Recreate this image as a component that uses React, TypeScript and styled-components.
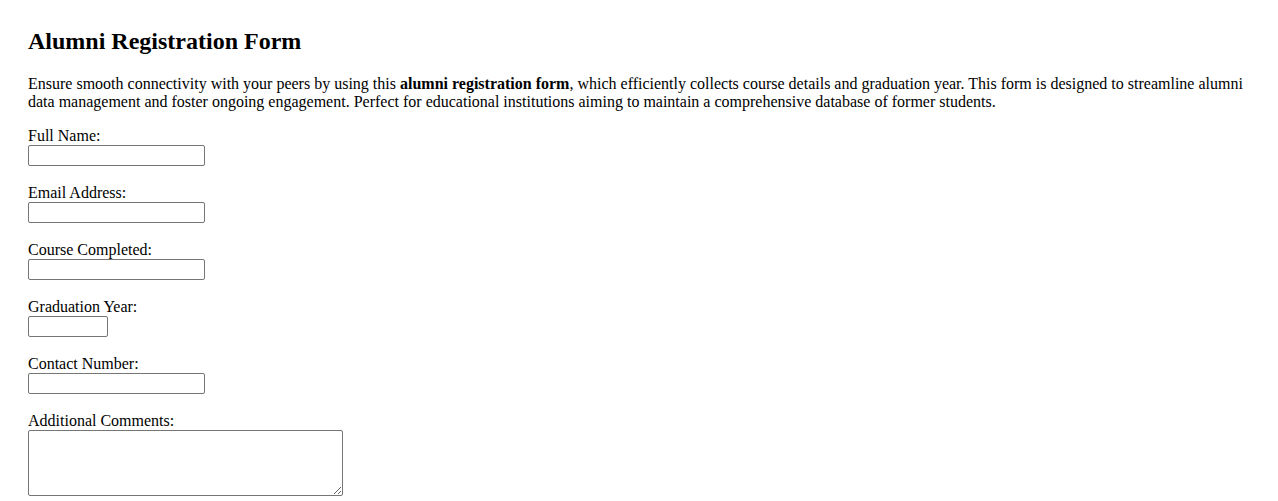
import React from 'react';
import styled, { createGlobalStyle } from 'styled-components';

const GlobalStyle = createGlobalStyle`
  body {
    margin: 0;
    padding: 28px;
    background: #fff;
    color: #000;
    font-family: "Liberation Serif", "Times New Roman", serif;
    font-size: 16px;
  }
`;

const Page = styled.div`
  display: flex;
  flex-direction: column;
`;

const Title = styled.h2`
  margin: 0 0 20px;
  font-size: 24px;
  font-weight: 700;
  line-height: 27px;
`;

const Intro = styled.p`
  margin: 0 0 16px;
  line-height: 18px;
`;

const Form = styled.form`
  display: flex;
  flex-direction: column;
  gap: 18px;
`;

const Field = styled.div`
  display: flex;
  flex-direction: column;
  align-items: flex-start;
`;

const Label = styled.label`
  height: 18px;
  line-height: 18px;
`;

const TextInput = styled.input<{ $width?: number }>`
  box-sizing: border-box;
  width: ${(p) => p.$width ?? 177}px;
  height: 21px;
  margin: 0;
  padding: 1px 2px;
  border: 1px solid #767676;
  border-radius: 2px;
  background: #fff;
  font-family: "Liberation Sans", Arial, sans-serif;
  font-size: 13px;
`;

const Comments = styled.textarea`
  box-sizing: border-box;
  width: 315px;
  height: 66px;
  margin: 0;
  padding: 2px;
  border: 1px solid #767676;
  border-radius: 2px;
  font-family: "Liberation Mono", monospace;
  font-size: 13px;
`;

const fields = [
  { id: 'fullName', label: 'Full Name:', type: 'text' },
  { id: 'email', label: 'Email Address:', type: 'email' },
  { id: 'course', label: 'Course Completed:', type: 'text' },
  { id: 'gradYear', label: 'Graduation Year:', type: 'number', width: 80 },
  { id: 'contact', label: 'Contact Number:', type: 'tel' },
];

export default function App() {
  return (
    <Page>
      <GlobalStyle />
      <Title>Alumni Registration Form</Title>
      <Intro>
        Ensure smooth connectivity with your peers by using this <b>alumni registration form</b>, which efficiently
        collects course details and graduation year. This form is designed to streamline alumni data management and
        foster ongoing engagement. Perfect for educational institutions aiming to maintain a comprehensive database of
        former students.
      </Intro>
      <Form onSubmit={(e) => e.preventDefault()}>
        {fields.map((f) => (
          <Field key={f.id}>
            <Label htmlFor={f.id}>{f.label}</Label>
            <TextInput id={f.id} type={f.type} $width={f.width} />
          </Field>
        ))}
        <Field>
          <Label htmlFor="comments">Additional Comments:</Label>
          <Comments id="comments" />
        </Field>
      </Form>
    </Page>
  );
}
